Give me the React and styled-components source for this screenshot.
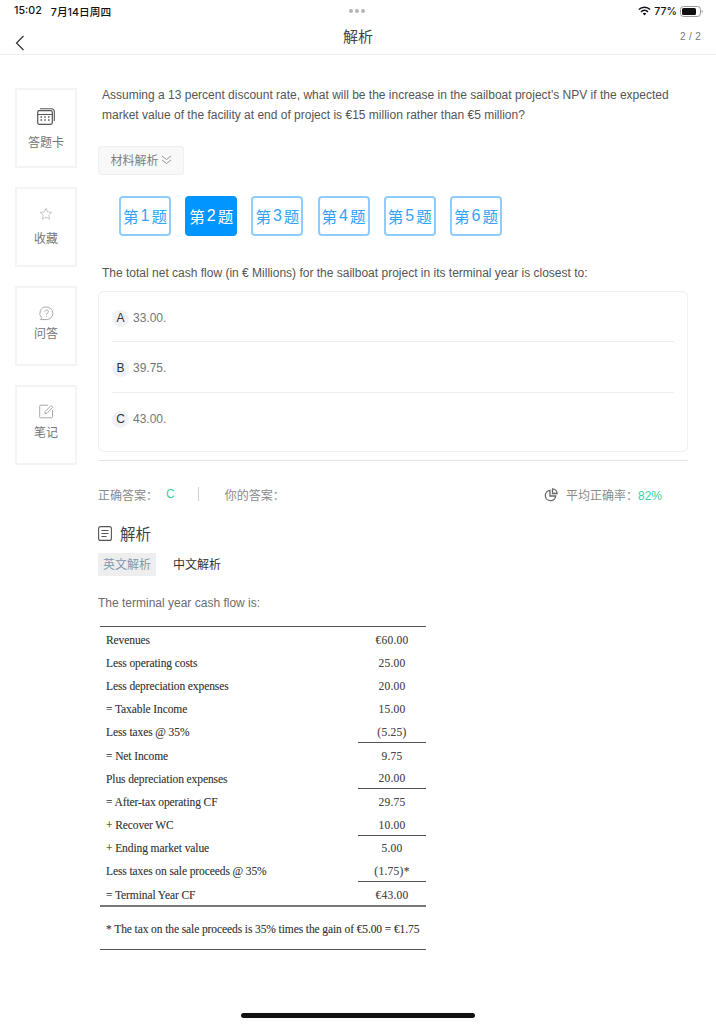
import React from "react";
import styled, { createGlobalStyle } from "styled-components";

const Global = createGlobalStyle`
  html, body { margin: 0; padding: 0; background: #fff; }
  body { font-family: "Liberation Sans", "Noto Sans CJK SC", sans-serif; }
  * { box-sizing: border-box; }
`;

const Page = styled.div`
  width: 716px; height: 1024px; position: relative; overflow: hidden; background: #fff;
  display: flex; flex-direction: column;
`;
const StatusBar = styled.div`
  height: 20px; padding: 2px 13px 0 14px; display: flex; align-items: center; justify-content: space-between;
  font-size: 11px; color: #111; position: relative;
`;
const StatusLeft = styled.div`display: flex; gap: 9px; font-family: "Inter", "Noto Sans CJK SC", sans-serif; font-weight: 500; font-size: 10.7px;`;
const StatusRight = styled.div`display: flex; align-items: center; gap: 3px; font-family: "Inter", sans-serif; font-size: 10.5px; font-weight: 500;`;
const Dots = styled.div`
  position: absolute; left: 349px; top: 9px; display: flex; gap: 2px;
  span { width: 4px; height: 4px; border-radius: 50%; background: #b5b5b5; }
`;
const NavBar = styled.div`
  height: 35px; border-bottom: 1px solid #f0f0f0; display: grid; grid-template-columns: 1fr auto 1fr; align-items: start; padding: 0 15px;
`;
const NavTitle = styled.div`font-size: 15px; line-height: 32px; color: #444; font-family: "Noto Sans CJK SC", sans-serif;`;
const NavCount = styled.div`font-size: 10px; line-height: 34px; color: #777; text-align: right; letter-spacing: .3px;`;
const Back = styled.svg`margin-top: 15px; display: block;`;
const Body = styled.div`display: flex; padding: 33px 28px 0 15px; gap: 21px; flex: 1;`;
const Side = styled.div`width: 62px; display: flex; flex-direction: column; gap: 19px; flex: none;`;
const SideCard = styled.div`
  height: 80px; border: 2px solid #f4f4f4; display: flex; flex-direction: column; align-items: center;
  padding-top: ${p => p.$top}px; gap: ${p => p.$gap}px; font-size: 12px; line-height: 16px; color: #757575;
  font-family: "Noto Sans CJK SC", sans-serif;
`;
const Main = styled.div`flex: 1; min-width: 0; color: #5c5c5c;`;
const Question = styled.p`margin: -3.5px 0 0 4px; font-size: 12px; line-height: 20.5px; color: #555;`;
const MaterialBtn = styled.div`
  margin-top: 20px; width: 86px; height: 29px; border: 1px solid #efefef; border-radius: 3px; background: #f8f8f8;
  display: flex; align-items: center; justify-content: center; gap: 2px; color: #808080; font-size: 12px; padding-bottom: 1px;
  font-family: "Noto Sans CJK SC", sans-serif;
`;
const Tabs = styled.div`display: flex; gap: 14.2px; margin: 21.5px 0 0 21px;`;
const Tab = styled.div`
  width: 52px; height: 40px; border-radius: 4px; border: 2px solid ${p => p.$active ? "#0095ff" : "#8fcdfc"};
  background: ${p => p.$active ? "#0095ff" : "#fff"}; color: ${p => p.$active ? "#fff" : "#33a4f8"};
  display: flex; align-items: center; justify-content: center; font-size: 15.5px; gap: 2px; padding-bottom: 1px;
  font-family: "Noto Sans CJK SC", sans-serif;
  b { font-family: "Liberation Sans", sans-serif; font-weight: 400; font-size: 16px; }
`;
const Prompt = styled.p`margin: 26.5px 0 0 4px; font-size: 12px; line-height: 20px; color: #555;`;
const Options = styled.div`margin-top: 8.5px; height: 161px; border: 1px solid #f0f0f0; border-radius: 6px; padding: 0 13px;`;
const Option = styled.div`
  height: 50.3px; padding-top: 3px; display: flex; align-items: center; gap: 4px; font-size: 12px; color: #757575;
  border-bottom: ${p => p.$last ? "none" : "1px solid #eeeef2"};
`;
const Badge = styled.span`
  width: 17px; height: 17px; border-radius: 50%; background: #f1f2f5; color: #333; display: flex; align-items: center; justify-content: center; font-size: 12px;
`;
const Divider = styled.div`height: 1px; background: #e5e5ee; margin-top: 7.5px;`;
const Answer = styled.div`
  margin-top: 24.5px; height: 18px; display: flex; align-items: center; font-size: 12px; color: #8a8a8a; padding-right: 26px;
  font-family: "Noto Sans CJK SC", sans-serif;
`;
const Green = styled.span`color: #3ccf9a; font-family: "Liberation Sans", sans-serif;`;
const AnswerKey = styled(Green)`margin-left: 8px;`;
const Sep = styled.span`width: 1px; height: 14px; background: #c9d3dc; margin: 0 26px 0 23px;`;
const Rate = styled.div`margin-left: auto; display: flex; align-items: center; gap: 8px;`;
const RateIcon = styled.svg`margin-top: 1px;`;
const Heading = styled.div`
  margin-top: 19px; display: flex; align-items: center; gap: 8px; font-size: 15.5px; line-height: 22px; color: #444;
  font-family: "Noto Sans CJK SC", sans-serif;
`;
const LangTabs = styled.div`display: flex; gap: 17px; margin-top: 9px; font-size: 12px; font-family: "Noto Sans CJK SC", sans-serif;`;
const Lang = styled.div`
  height: 23px; line-height: 22px; padding: 0 ${p => p.$active ? 5 : 0}px; background: ${p => p.$active ? "#eeeeee" : "transparent"};
  color: ${p => p.$active ? "#8496ad" : "#333"};
`;
const Lead = styled.p`margin: 17px 0 0; font-size: 12px; line-height: 20px; color: #6d6d6d;`;
const Table = styled.div`
  margin: 13px 0 0 2px; width: 326px; font-family: "Liberation Serif", serif; font-size: 11.5px; color: #3a3a3a;
  border-top: 1px solid #555; letter-spacing: -.1px; text-shadow: 0 0 .4px rgba(60,60,60,.4);
`;
const Row = styled.div`
  display: grid; grid-template-columns: 258px 68px; height: 23.2px; align-items: center; padding-top: 2px;
`;
const Label = styled.span`padding-left: 6px; white-space: nowrap;`;
const Val = styled.span`
  height: 100%; display: flex; align-items: center; justify-content: center; letter-spacing: .25px; color: #4a4a4a;
  border-bottom: ${p => p.$rule ? "1px solid #555" : "none"};
`;
const Foot = styled.div`
  border-top: 2px solid #777; border-bottom: 1px solid #555; height: 45px; display: flex; align-items: center; padding: 2px 0 0 6px; white-space: nowrap;
`;
const Home = styled.div`
  position: absolute; left: 241px; top: 1013px; width: 234px; height: 4.5px; border-radius: 3px; background: #111;
`;

const I = { fill: "none", stroke: "currentColor" };

const rows = [
  ["Revenues", "€60.00"],
  ["Less operating costs", "25.00"],
  ["Less depreciation expenses", "20.00"],
  ["= Taxable Income", "15.00"],
  ["Less taxes @ 35%", "(5.25)", true],
  ["= Net Income", "9.75"],
  ["Plus depreciation expenses", "20.00", true],
  ["= After-tax operating CF", "29.75"],
  ["+ Recover WC", "10.00", true],
  ["+ Ending market value", "5.00"],
  ["Less taxes on sale proceeds @ 35%", "(1.75)*", true],
  ["= Terminal Year CF", "€43.00"],
];

export default function App() {
  return (
    <Page>
      <Global />
      <StatusBar>
        <StatusLeft><span>15:02</span><span>7月14日周四</span></StatusLeft>
        <Dots><span /><span /><span /></Dots>
        <StatusRight>
          <svg width="13" height="10" viewBox="0 0 13 10"><path d="M6.5 9.5 4.7 7.5a2.6 2.6 0 0 1 3.6 0zM3.6 6.4 2.5 5.2a5.8 5.8 0 0 1 8 0L9.4 6.4a4.2 4.2 0 0 0-5.8 0zM1.4 4.1.3 2.9a8.9 8.9 0 0 1 12.4 0l-1.1 1.2a7.3 7.3 0 0 0-10.2 0z" fill="#111" /></svg>
          <span>77%</span>
          <svg width="23" height="11" viewBox="0 0 23 11"><rect x=".5" y=".5" width="20" height="10" rx="3" fill="none" stroke="#999" /><rect x="2" y="2" width="14" height="7" rx="1.5" fill="#111" /><path d="M21.7 3.8c.7.3 1 1 1 1.7s-.3 1.4-1 1.7z" fill="#999" /></svg>
        </StatusRight>
      </StatusBar>
      <NavBar>
        <Back width="10" height="16" viewBox="0 0 10 16"><path d="M8.5 1 1.5 8l7 7" fill="none" stroke="#333" strokeWidth="1.2" /></Back>
        <NavTitle>解析</NavTitle>
        <NavCount>2 / 2</NavCount>
      </NavBar>
      <Body>
        <Side>
          <SideCard $top={18} $gap={9}>
            <svg width="18" height="17" viewBox="0 0 18 17" color="#555" {...I}>
              <rect x=".7" y="2.7" width="14.6" height="13.6" rx="1.5" strokeWidth="1.2" />
              <path d="M3 .7h11.5A2.8 2.8 0 0 1 17.3 3.500V13" strokeWidth="1.1" />
              <path d="M.7 6.500h14.600" strokeWidth="1" />
              <path d="M3.500 9h1.500M7.300 9h1.500M11 9h1.500M3.500 12h1.500M7.300 12h1.500M11 12h1.500" strokeWidth="1.300" />
            </svg>
            答题卡
          </SideCard>
          <SideCard $top={18} $gap={9}>
            <svg width="14" height="14" viewBox="0 0 14 14" color="#c8c8c8" {...I}>
              <path d="M7 1.200 8.700 5l4.100.4-3.100 2.700.9 4.100L7 10.100 3.400 12.200l.9-4.100L1.200 5.400 5.300 5z" strokeWidth="1" />
            </svg>
            收藏
          </SideCard>
          <SideCard $top={18} $gap={4}>
            <svg width="15" height="15" viewBox="0 0 15 15" color="#a9a9a9" {...I}>
              <path d="M7.500 1a6.300 6.300 0 0 1 0 12.600H1.600l1-1.900A6.300 6.300 0 0 1 7.500 1z" strokeWidth="1" />
              <path d="M5.800 5.700c0-2.200 3.500-2.200 3.500 0 0 1.500-1.800 1.400-1.800 3M7.500 10v.9" strokeWidth="1" />
            </svg>
            问答
          </SideCard>
          <SideCard $top={17} $gap={5}>
            <svg width="15" height="15" viewBox="0 0 15 15" color="#a9a9a9" {...I}>
              <path d="M13.500 6v6.800a1 1 0 0 1-1 1H1.700a1 1 0 0 1-1-1V2.200a1 1 0 0 1 1-1H9" strokeWidth="1" />
              <path d="m5.800 9.700.4-2.200L12 1.500l1.700 1.700L8 9.300z" strokeWidth="1" />
            </svg>
            笔记
          </SideCard>
        </Side>
        <Main>
          <Question>Assuming a 13 percent discount rate, what will be the increase in the sailboat project's NPV if the expected market value of the facility at end of project is €15 million rather than €5 million?</Question>
          <MaterialBtn>
            材料解析
            <svg width="11" height="10" viewBox="0 0 11 10" color="#999" {...I}><path d="m1 1 4.500 3.500L10 1M1 5l4.500 3.500L10 5" strokeWidth="1" /></svg>
          </MaterialBtn>
          <Tabs>
            {[1, 2, 3, 4, 5, 6].map(n => (
              <Tab key={n} $active={n === 2}>第<b>{n}</b>题</Tab>
            ))}
          </Tabs>
          <Prompt>The total net cash flow (in € Millions) for the sailboat project in its terminal year is closest to:</Prompt>
          <Options>
            <Option><Badge>A</Badge>33.00.</Option>
            <Option><Badge>B</Badge>39.75.</Option>
            <Option $last><Badge>C</Badge>43.00.</Option>
          </Options>
          <Divider />
          <Answer>
            <span>正确答案：</span><AnswerKey>C</AnswerKey>
            <Sep />
            <span>你的答案：</span>
            <Rate>
              <RateIcon width="14" height="14" viewBox="0 0 14 14" color="#666" {...I}>
                <path d="M6 2.300a5.200 5.200 0 1 0 5.700 5.700H6z" strokeWidth="1.300" />
                <path d="M8.500.9a4.800 4.800 0 0 1 4.600 4.600H8.500z" strokeWidth="1.300" />
              </RateIcon>
              <span>平均正确率：<Green>82%</Green></span>
            </Rate>
          </Answer>
          <Heading>
            <svg width="14" height="15" viewBox="0 0 14 15" color="#555" {...I}>
              <rect x=".6" y=".6" width="12.800" height="13.800" rx="2" strokeWidth="1.100" />
              <path d="M3.500 4.500h7M3.500 7.500h7M3.500 10.500h5" strokeWidth="1" />
            </svg>
            解析
          </Heading>
          <LangTabs>
            <Lang $active>英文解析</Lang>
            <Lang>中文解析</Lang>
          </LangTabs>
          <Lead>The terminal year cash flow is:</Lead>
          <Table>
            {rows.map(([label, value, rule]) => (
              <Row key={label}>
                <Label>{label}</Label>
                <Val $rule={rule}>{value}</Val>
              </Row>
            ))}
            <Foot>* The tax on the sale proceeds is 35% times the gain of €5.00 = €1.75</Foot>
          </Table>
        </Main>
      </Body>
      <Home />
    </Page>
  );
}
